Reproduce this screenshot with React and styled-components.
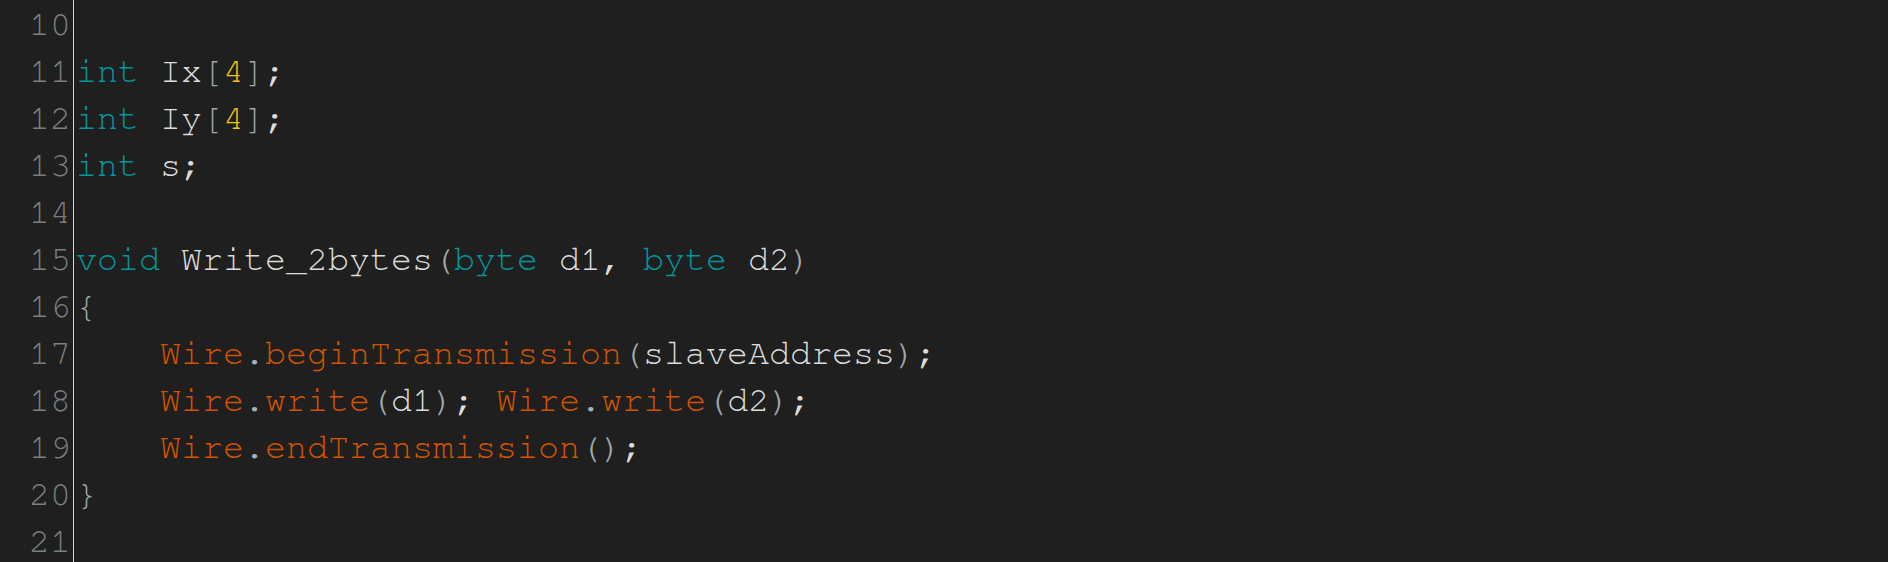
import React from 'react';
import styled, { createGlobalStyle } from 'styled-components';

const GlobalStyle = createGlobalStyle`
    html, body {
        margin: 0;
        padding: 0;
        background: #1f1f1f;
    }
`;

const lines = [
    { n: 10, tokens: [] },
    { n: 11, tokens: [['kw', 'int'], ['id', ' Ix'], ['br', '['], ['num', '4'], ['br', ']'], ['id', ';']] },
    { n: 12, tokens: [['kw', 'int'], ['id', ' Iy'], ['br', '['], ['num', '4'], ['br', ']'], ['id', ';']] },
    { n: 13, tokens: [['kw', 'int'], ['id', ' s;']] },
    { n: 14, tokens: [] },
    { n: 15, tokens: [['kw', 'void'], ['id', ' Write_2bytes'], ['br', '('], ['kw', 'byte'], ['id', ' d1, '], ['kw', 'byte'], ['id', ' d2'], ['br', ')']] },
    { n: 16, tokens: [['br', '{']] },
    { n: 17, tokens: [['id', '    '], ['fn', 'Wire'], ['dot', '.'], ['fn', 'beginTransmission'], ['br', '('], ['id', 'slaveAddress'], ['br', ')'], ['id', ';']] },
    { n: 18, tokens: [['id', '    '], ['fn', 'Wire'], ['dot', '.'], ['fn', 'write'], ['br', '('], ['id', 'd1'], ['br', ')'], ['id', '; '], ['fn', 'Wire'], ['dot', '.'], ['fn', 'write'], ['br', '('], ['id', 'd2'], ['br', ')'], ['id', ';']] },
    { n: 19, tokens: [['id', '    '], ['fn', 'Wire'], ['dot', '.'], ['fn', 'endTransmission'], ['br', '()'], ['id', ';']] },
    { n: 20, tokens: [['br', '}']] },
    { n: 21, tokens: [] },
];

const App = () => {
    return (
        <Editor>
            <GlobalStyle />
            <Gutter>
                {lines.map((line) => (
                    <LineNo key={line.n}>{line.n}</LineNo>
                ))}
            </Gutter>
            <Code>
                {lines.map((line) => (
                    <CodeLine key={line.n}>
                        {line.tokens.map(([kind, text], i) => (
                            <Token key={i} $kind={kind}>{text}</Token>
                        ))}
                    </CodeLine>
                ))}
            </Code>
        </Editor>
    );
};

const colors = {
    kw: '#00979c',
    id: '#dcdcdc',
    br: '#a0a8aa',
    num: '#f1c40f',
    fn: '#d35400',
    dot: '#a6b0b8',
};

const Editor = styled.div`
    display: flex;
    width: 1888px;
    height: 562px;
    overflow: hidden;
    background: #1f1f1f;
    font-family: "Nimbus Mono PS", "FreeMono", "Courier New", "Liberation Mono", monospace;
    font-size: 35px;
    line-height: 47px;
`;

const Gutter = styled.div`
    width: 71px;
    padding: 1px 2px 0 0;
    border-right: 1px solid #d4d4d4;
    text-align: right;
    color: #7b7f80;
`;

const LineNo = styled.div`
    height: 47px;
`;

const Code = styled.div`
    flex: 1;
    padding: 1px 0 0 2px;
`;

const CodeLine = styled.div`
    height: 47px;
    white-space: pre;
`;

const Token = styled.span`
    color: ${(props) => colors[props.$kind]};
`;

export default App;
